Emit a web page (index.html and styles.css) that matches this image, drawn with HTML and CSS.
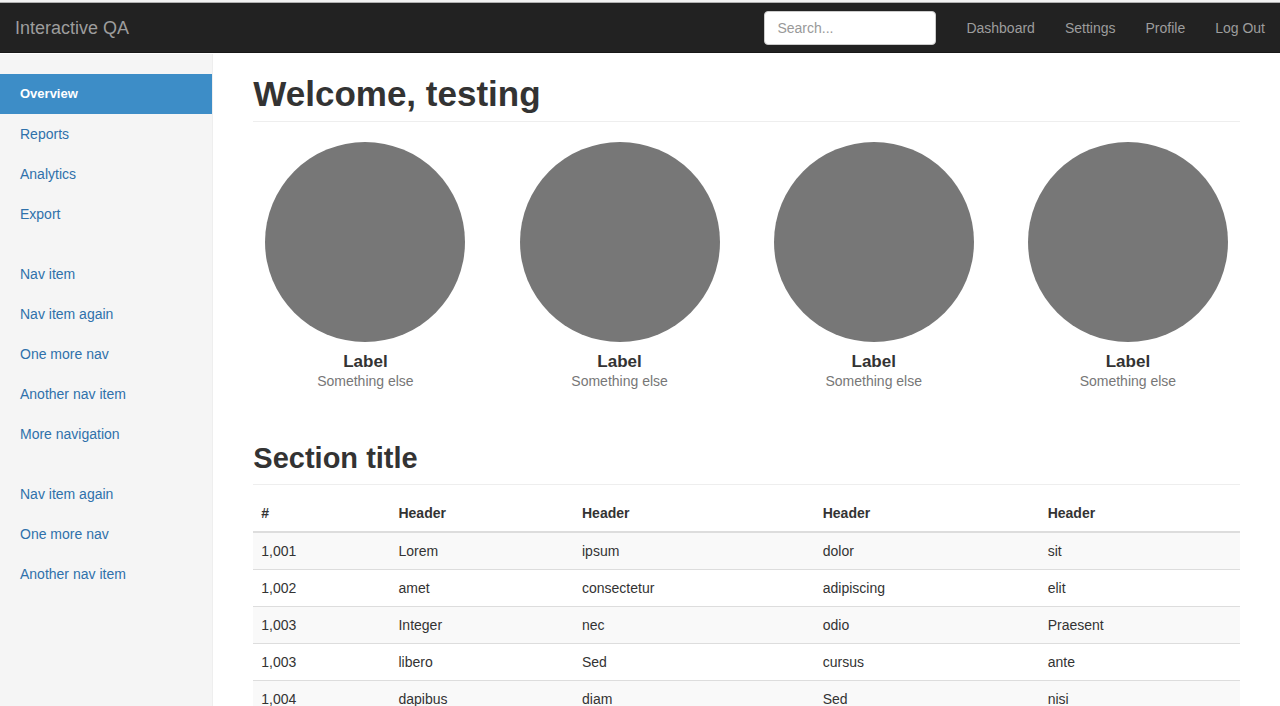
FILE: index.html
```html
<!DOCTYPE html>
<html lang="en">
<head>
<meta charset="utf-8">
<meta name="viewport" content="width=device-width, initial-scale=1">
<title>Interactive QA</title>
<link rel="stylesheet" href="styles.css">
</head>
<body>
<header class="navbar">
  <a class="brand" href="#">Interactive QA</a>
  <form class="search"><input class="search-input" type="text" placeholder="Search..." aria-label="Search"></form>
  <nav class="top-nav">
    <a href="#">Dashboard</a>
    <a href="#">Settings</a>
    <a href="#">Profile</a>
    <a href="#">Log Out</a>
  </nav>
</header>
<div class="layout">
  <aside class="sidebar">
    <ul class="nav-group">
      <li><a class="active" href="#">Overview</a></li>
      <li><a href="#">Reports</a></li>
      <li><a href="#">Analytics</a></li>
      <li><a href="#">Export</a></li>
    </ul>
    <ul class="nav-group">
      <li><a href="#">Nav item</a></li>
      <li><a href="#">Nav item again</a></li>
      <li><a href="#">One more nav</a></li>
      <li><a href="#">Another nav item</a></li>
      <li><a href="#">More navigation</a></li>
    </ul>
    <ul class="nav-group">
      <li><a href="#">Nav item again</a></li>
      <li><a href="#">One more nav</a></li>
      <li><a href="#">Another nav item</a></li>
    </ul>
  </aside>
  <main class="main">
    <h1 class="page-header">Welcome, testing</h1>
    <section class="placeholders">
      <div class="placeholder"><div class="circle"></div><h4>Label</h4><span>Something else</span></div>
      <div class="placeholder"><div class="circle"></div><h4>Label</h4><span>Something else</span></div>
      <div class="placeholder"><div class="circle"></div><h4>Label</h4><span>Something else</span></div>
      <div class="placeholder"><div class="circle"></div><h4>Label</h4><span>Something else</span></div>
    </section>
    <h2 class="sub-header">Section title</h2>
    <table class="table">
      <colgroup><col class="col-id"><col class="col-a"><col class="col-b"><col class="col-c"><col></colgroup>
      <thead>
        <tr><th>#</th><th>Header</th><th>Header</th><th>Header</th><th>Header</th></tr>
      </thead>
      <tbody>
        <tr><td>1,001</td><td>Lorem</td><td>ipsum</td><td>dolor</td><td>sit</td></tr>
        <tr><td>1,002</td><td>amet</td><td>consectetur</td><td>adipiscing</td><td>elit</td></tr>
        <tr><td>1,003</td><td>Integer</td><td>nec</td><td>odio</td><td>Praesent</td></tr>
        <tr><td>1,003</td><td>libero</td><td>Sed</td><td>cursus</td><td>ante</td></tr>
        <tr><td>1,004</td><td>dapibus</td><td>diam</td><td>Sed</td><td>nisi</td></tr>
      </tbody>
    </table>
  </main>
</div>
</body>
</html>
```
FILE: styles.css
```css
* { box-sizing: border-box; }

body {
  margin: 0;
  min-height: 100vh;
  display: flex;
  flex-direction: column;
  border-top: 2px solid #f2f2f2;
  background: #fff;
  color: #333;
  font: 14px/20px "Liberation Sans", Arial, sans-serif;
}

a { text-decoration: none; }

.navbar {
  display: flex;
  align-items: center;
  height: 51px;
  padding: 0 15px;
  border-top: 1px solid #b0b0b0;
  border-bottom: 1px solid #181818;
  background: #222;
}

.brand {
  margin-right: auto;
  color: #9d9d9d;
  font-size: 18px;
}

.search { margin-right: 30px; }

.search-input {
  display: block;
  width: 172px;
  height: 34px;
  padding: 6px 12px;
  border: 1px solid #ccc;
  border-radius: 4px;
  background: #fff;
  color: #555;
  font: inherit;
}

.search-input::placeholder { color: #999; opacity: 1; }

.top-nav { display: flex; gap: 30px; }
.top-nav a { color: #9d9d9d; }

.layout {
  flex: 1;
  display: grid;
  grid-template-columns: minmax(0, 1fr) minmax(0, 5fr);
  margin-top: 1px;
}

.sidebar {
  padding: 20px 0;
  border-right: 1px solid #eee;
  background: #f5f5f5;
}

.nav-group {
  margin: 0 0 20px;
  padding: 0;
  list-style: none;
}

.nav-group a {
  display: block;
  padding: 10px 20px;
  color: #2f71ab;
}

.nav-group .active {
  background: #3d8dc7;
  color: #fff;
  font-size: 13px;
  font-weight: 700;
}

.main { padding: 20px 40px 0; }

h1, h2, h4 {
  margin: 0;
  font-weight: 700;
}

.page-header {
  margin-bottom: 20px;
  padding-bottom: 8px;
  border-bottom: 1px solid #eee;
  font-size: 35px;
  line-height: 39px;
}

.placeholders {
  display: grid;
  grid-template-columns: repeat(4, minmax(0, 1fr));
  margin: 0 -15px 50px;
  color: #777;
  text-align: center;
}

.circle {
  width: 200px;
  max-width: 100%;
  aspect-ratio: 1;
  margin: 0 auto 10px;
  border-radius: 50%;
  background: #777;
}

.placeholder h4 {
  color: #333;
  font-size: 17px;
  line-height: 19px;
}

.sub-header {
  margin-bottom: 10px;
  padding-bottom: 9px;
  border-bottom: 1px solid #eee;
  font-size: 29px;
  line-height: 34px;
}

.table {
  width: 100%;
  border-spacing: 0;
  table-layout: fixed;
}

.col-id { width: 13.9%; }
.col-a { width: 18.6%; }
.col-b { width: 24.4%; }
.col-c { width: 22.8%; }

.table th,
.table td {
  padding: 8px;
  text-align: left;
}

.table th { border-bottom: 2px solid #ddd; }
.table tr + tr td { border-top: 1px solid #ddd; }
.table tbody tr:nth-child(odd) { background: #f9f9f9; }
```
